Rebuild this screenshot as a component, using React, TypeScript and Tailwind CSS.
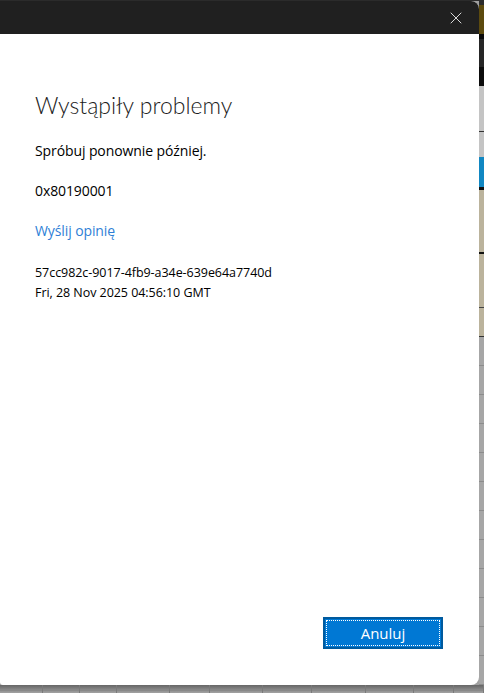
import { X } from "lucide-react";

const strip = [
  { h: 4, c: "bg-[#2b2b2b]" },
  { h: 30, c: "bg-[#5c4a0e]" },
  { h: 5, c: "bg-[#0a0a0a]" },
  { h: 28, c: "bg-[#262626]" },
  { h: 20, c: "bg-[#0c0c0c]" },
  { h: 45, c: "bg-[#c4c4c4]" },
  { h: 1, c: "bg-[#333333]" },
  { h: 26, c: "bg-[#c4c4c4]" },
  { h: 30, c: "bg-[#1187c2]" },
  { h: 3, c: "bg-[#111111]" },
  { h: 63, c: "bg-[#bbb39c]" },
  { h: 3, c: "bg-[#111111]" },
  { h: 53, c: "bg-[#bbb39c]" },
  { h: 1, c: "bg-[#444444]" },
  { h: 29, c: "bg-[#bbb39c]" },
  { h: 1, c: "bg-[#333333]" },
];

const gridCols = [43, 37, 37, 53, 40, 53, 49, 54, 48, 40, 30];

export default function App() {
  return (
    <div
      className="flex h-[693px] w-[484px] flex-col overflow-hidden bg-[#a0a0a0]"
      style={{ fontFamily: '"Open Sans", "Noto Sans", Arial, sans-serif' }}
    >
      <div className="h-px bg-[#2b2b2b]" />
      <div className="flex h-[684px]">
        {/* Dialog */}
        <div className="flex w-[479px] flex-col overflow-hidden rounded-r-lg rounded-bl-[3px] bg-white">
          <div className="flex h-[33px] items-center justify-end bg-[#202020] pr-[13px]">
            <X size={20} strokeWidth={1} className="text-white" />
          </div>
          <div className="flex flex-1 flex-col px-[35px] pt-[56px] pb-[36px] text-black">
            <h1
              className="text-[23px] font-light leading-[30px] text-[#1b1b1b]"
              style={{ fontFamily: 'Lato, "Open Sans", sans-serif' }}
            >
              Wystąpiły problemy
            </h1>
            <p className="mt-[21px] text-[14px] leading-[20px] tracking-[-0.1px]">
              Spróbuj ponownie później.
            </p>
            <p className="mt-[20px] text-[14px] leading-[20px] tracking-[-0.1px]">
              0x80190001
            </p>
            <a className="mt-[20px] text-[14px] leading-[20px] tracking-[-0.1px] text-[#2f7fd6]">
              Wyślij opinię
            </a>
            <p className="mt-[22px] text-[12.5px] leading-[20px] tracking-[-0.05px]">
              57cc982c-9017-4fb9-a34e-639e64a7740d
            </p>
            <p className="text-[12.5px] leading-[20px] tracking-[-0.05px]">
              Fri, 28 Nov 2025 04:56:10 GMT
            </p>
            <div className="mt-auto flex justify-end pr-[1px]">
              <button className="flex h-[32px] w-[120px] items-center justify-center border-2 border-[#005a9e] bg-[#0078d4] p-[1px]">
                <span className="flex h-full w-full items-center justify-center border border-dotted border-white text-[15px] text-white">
                  Anuluj
                </span>
              </button>
            </div>
          </div>
        </div>
        {/* Background app behind the dialog */}
        <div className="flex w-[5px] flex-col">
          {strip.map((s, i) => (
            <div key={i} className={s.c} style={{ height: s.h }} />
          ))}
          <div className="flex flex-1 flex-col bg-[#a6a6a6]">
            {Array.from({ length: 12 }).map((_, i) => (
              <div key={i} className="h-[29px] border-b border-[#8c8c8c]" />
            ))}
          </div>
        </div>
      </div>
      <div className="flex h-[8px] bg-gradient-to-b from-[#666666] to-[#a2a2a2]">
        {gridCols.map((w, i) => (
          <div
            key={i}
            className="h-full border-r border-[#7a7a7a]"
            style={{ width: w }}
          >
            <div className="mt-[5px] border-b border-[#888888]" />
          </div>
        ))}
      </div>
    </div>
  );
}
